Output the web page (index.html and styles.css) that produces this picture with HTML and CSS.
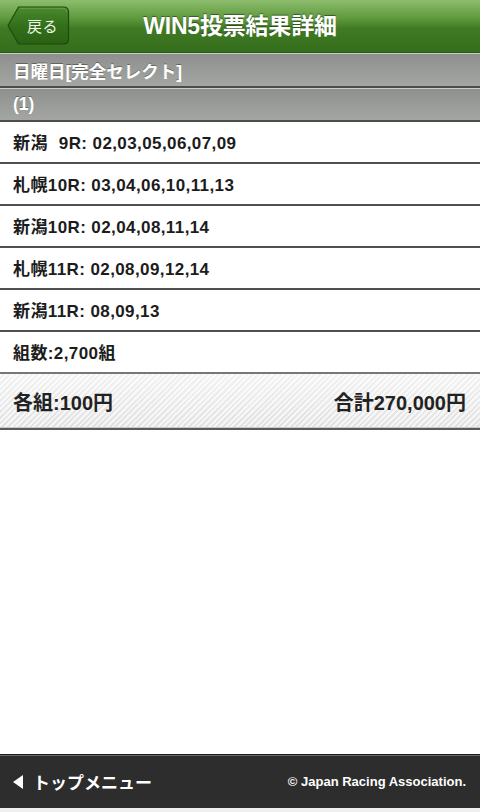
FILE: index.html
```html
<html lang="ja">
<head>
<meta charset="UTF-8">
<meta name="viewport" content="width=device-width, initial-scale=1.0">
<title>WIN5投票結果詳細</title>
<link rel="stylesheet" href="styles.css">
</head>
<body>

<header class="top-bar">
  <div class="back-cell">
    <a class="back-btn" href="#">
      <svg class="back-shape" width="63" height="39" viewBox="0 0 63 39">
        <defs>
          <linearGradient id="btnfill" x1="0" y1="0" x2="0" y2="1">
            <stop offset="0" stop-color="#4b8a2e"/>
            <stop offset="0.5" stop-color="#33701b"/>
            <stop offset="1" stop-color="#2a6113"/>
          </linearGradient>
        </defs>
        <path d="M1 19.5 L11.5 1 H56.5 Q61.5 1 61.5 6 V33 Q61.5 38 56.5 38 H11.5 Z" fill="url(#btnfill)" stroke="#1e4a0e" stroke-width="1.2"/>
        <path d="M12.5 2.3 H56 Q60 2.3 60 6.3" fill="none" stroke="#6fa552" stroke-width="0.8"/>
      </svg>
      <span class="back-text">戻る</span>
    </a>
  </div>
  <h1 class="page-title">WIN5投票結果詳細</h1>
  <div></div>
</header>

<main class="content">
  <div class="band">日曜日[完全セレクト]</div>
  <div class="band">(1)</div>

  <ul class="race-list">
    <li class="race-row">新潟<span class="digit-pad"></span>9R: 02,03,05,06,07,09</li>
    <li class="race-row">札幌10R: 03,04,06,10,11,13</li>
    <li class="race-row">新潟10R: 02,04,08,11,14</li>
    <li class="race-row">札幌11R: 02,08,09,12,14</li>
    <li class="race-row">新潟11R: 08,09,13</li>
    <li class="race-row">組数:2,700組</li>
  </ul>

  <div class="summary">
    <span>各組:100円</span>
    <span>合計270,000円</span>
  </div>
</main>

<footer class="bottom-bar">
  <a class="top-menu" href="#"><span class="arrow"></span>トップメニュー</a>
  <span class="copyright">© Japan Racing Association.</span>
</footer>
<div class="bottom-strip"></div>

</body>
</html>
```

FILE: styles.css
```css
:root{
  --font: "Liberation Sans", "Noto Sans CJK JP", sans-serif;
  --rowline: #4f4f4f;
  --text: #1c1c1c;
}

*{
  margin: 0;
  padding: 0;
  box-sizing: border-box;
}

body {
  width: 480px;
  height: 812px;
  font-family: var(--font);
  background-color: #fff;
  color: var(--text);
  display: flex;
  flex-direction: column;
}

a {
  text-decoration: none;
  color: inherit;
}

/* header */
.top-bar {
  height: 53px;
  padding-bottom: 4px;
  display: grid;
  grid-template-columns: 1fr auto 1fr;
  align-items: center;
  background: linear-gradient(#8dbd6d 0%, #5f9a3f 35%, #3f7a23 55%, #356e1c 100%);
  border-bottom: 1px solid #2a5a14;
}

.back-cell {
  padding-left: 7px;
  padding-top: 3px;
}

.back-btn {
  position: relative;
  display: flex;
  align-items: center;
  width: 63px;
  height: 39px;
}

.back-shape {
  position: absolute;
  left: 0;
  top: 0;
}

.back-text {
  position: relative;
  padding-left: 20px;
  font-size: 15px;
  color: #eef5e8;
  letter-spacing: 0.5px;
}

.page-title {
  font-size: 23px;
  font-weight: bold;
  color: #fff;
  text-shadow: 0 -1px 1px rgba(0,0,0,0.45);
  letter-spacing: -0.2px;
}

/* grey bands */
.band {
  height: 35px;
  padding-left: 13px;
  display: flex;
  align-items: center;
  font-size: 17.5px;
  font-weight: bold;
  color: #fff;
  text-shadow: 0 -1px 0 rgba(0,0,0,0.35);
  background: linear-gradient(#8e908d, #a4a6a3);
  border-top: 1px solid #cbcdca;
  border-bottom: 2px solid #4c4d4b;
}

.band + .band {
  height: 34px;
}

/* race rows */
.race-list {
  list-style: none;
}

.race-row {
  height: 42px;
  padding: 3px 0 0 13px;
  line-height: 37px;
  font-size: 17px;
  font-weight: bold;
  letter-spacing: 0.4px;
  border-bottom: 2px solid var(--rowline);
}

.race-row:last-child {
  border-bottom-color: #777;
}

.digit-pad {
  display: inline-block;
  width: 11px;
}

/* totals */
.summary {
  height: 56px;
  padding: 0 14px 0 13px;
  display: flex;
  align-items: center;
  justify-content: space-between;
  font-size: 20px;
  font-weight: bold;
  color: #222;
  background:
    repeating-linear-gradient(135deg, rgba(255,255,255,0.6) 0 2px, rgba(0,0,0,0.02) 2px 4px),
    linear-gradient(#f7f7f7, #e6e6e6);
  border-bottom: 2px solid #5a5a5a;
  box-shadow: inset 0 -1px 0 #c9c9c9;
}

.content {
  flex: 1;
}

/* footer */
.bottom-bar {
  height: 54px;
  padding: 0 14px 0 13px;
  display: flex;
  align-items: center;
  justify-content: space-between;
  background-color: #2d2d2d;
  border-top: 1px solid #1a1a1a;
  box-shadow: inset 0 1px 0 #6a6a6a;
  color: #fff;
}

.top-menu {
  display: flex;
  align-items: center;
  font-size: 17px;
  font-weight: bold;
}

.arrow {
  width: 0;
  height: 0;
  margin-right: 10px;
  border-top: 7px solid transparent;
  border-bottom: 7px solid transparent;
  border-right: 10px solid #fff;
}

.copyright {
  font-size: 13px;
  font-weight: bold;
}

.bottom-strip {
  height: 4px;
  background-color: #efefef;
}
```
